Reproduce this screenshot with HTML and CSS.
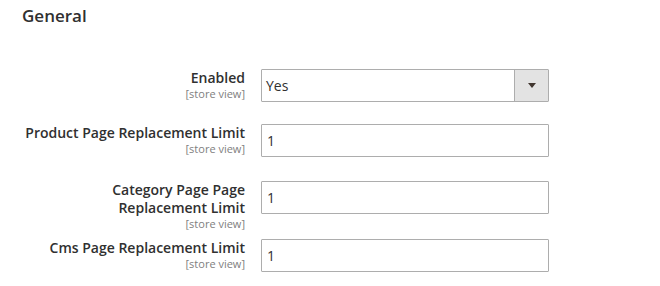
FILE: index.html
```html
<!DOCTYPE html>
<html lang="en">
<head>
    <meta charset="UTF-8">
    <title>General</title>
    <link rel="stylesheet" href="styles.css">
</head>
<body>
    <div class="section">
        <h2 class="section-title">General</h2>

        <div class="fields">
            <!-- Enabled -->
            <div class="field field-first">
                <div class="field-label">
                    <span>Enabled</span>
                    <span class="scope">[store view]</span>
                </div>
                <div class="field-control">
                    <div class="select">
                        <span class="select-value">Yes</span>
                        <span class="select-button"><span class="arrow"></span></span>
                    </div>
                </div>
            </div>

            <!-- Product page -->
            <div class="field">
                <div class="field-label">
                    <span>Product Page Replacement Limit</span>
                    <span class="scope">[store view]</span>
                </div>
                <div class="field-control">
                    <input class="input-text" type="text" value="1">
                </div>
            </div>

            <!-- Category page -->
            <div class="field field-tall">
                <div class="field-label">
                    <span>Category Page Page Replacement Limit</span>
                    <span class="scope">[store view]</span>
                </div>
                <div class="field-control">
                    <input class="input-text" type="text" value="1">
                </div>
            </div>

            <!-- Cms page -->
            <div class="field">
                <div class="field-label">
                    <span>Cms Page Replacement Limit</span>
                    <span class="scope">[store view]</span>
                </div>
                <div class="field-control">
                    <input class="input-text" type="text" value="1">
                </div>
            </div>
        </div>
    </div>
</body>
</html>
```

FILE: styles.css
```css
/* General */
body {
    font-family: "Open Sans", "Liberation Sans", sans-serif;
    background-color: #fff;
    color: #303030;
    margin: 0;
    padding: 0;
}

.section {
    padding: 5px 22px 0 22px;
}

.section-title {
    font-size: 17px;
    font-weight: 600;
    line-height: 22px;
    margin: 0 0 42px 0;
    color: #303030;
}

/* Rows */
.fields {
    display: flex;
    flex-direction: column;
}

.field {
    display: flex;
    align-items: flex-start;
    height: 33px;
    margin-bottom: 24px;
}

.field-first {
    margin-bottom: 22px;
}

.field-tall {
    margin-bottom: 25px;
}

.field-label {
    width: 223px;
    margin-right: 16px;
    padding-top: 0;
    text-align: right;
    font-size: 14px;
    font-weight: 600;
    line-height: 18px;
    display: flex;
    flex-direction: column;
    align-items: flex-end;
}

.scope {
    font-size: 11px;
    font-weight: 400;
    line-height: 13px;
    color: #808080;
}

.field-control {
    width: 288px;
}

/* Inputs */
.input-text {
    box-sizing: border-box;
    width: 100%;
    height: 33px;
    margin: 0;
    padding: 0 5px;
    border: 1px solid #adadad;
    border-radius: 1px;
    font-family: inherit;
    font-size: 14px;
    color: #303030;
    background-color: #fff;
}

.select {
    box-sizing: border-box;
    display: flex;
    height: 33px;
    border: 1px solid #adadad;
    border-radius: 1px;
    background-color: #fff;
}

.select-value {
    flex: 1;
    padding-left: 4px;
    font-size: 14px;
    line-height: 31px;
}

.select-button {
    width: 33px;
    border-left: 1px solid #adadad;
    background-color: #e3e3e3;
    display: flex;
    align-items: center;
    justify-content: center;
}

.arrow {
    width: 0;
    height: 0;
    border-left: 4px solid transparent;
    border-right: 4px solid transparent;
    border-top: 5px solid #41362f;
}
```
